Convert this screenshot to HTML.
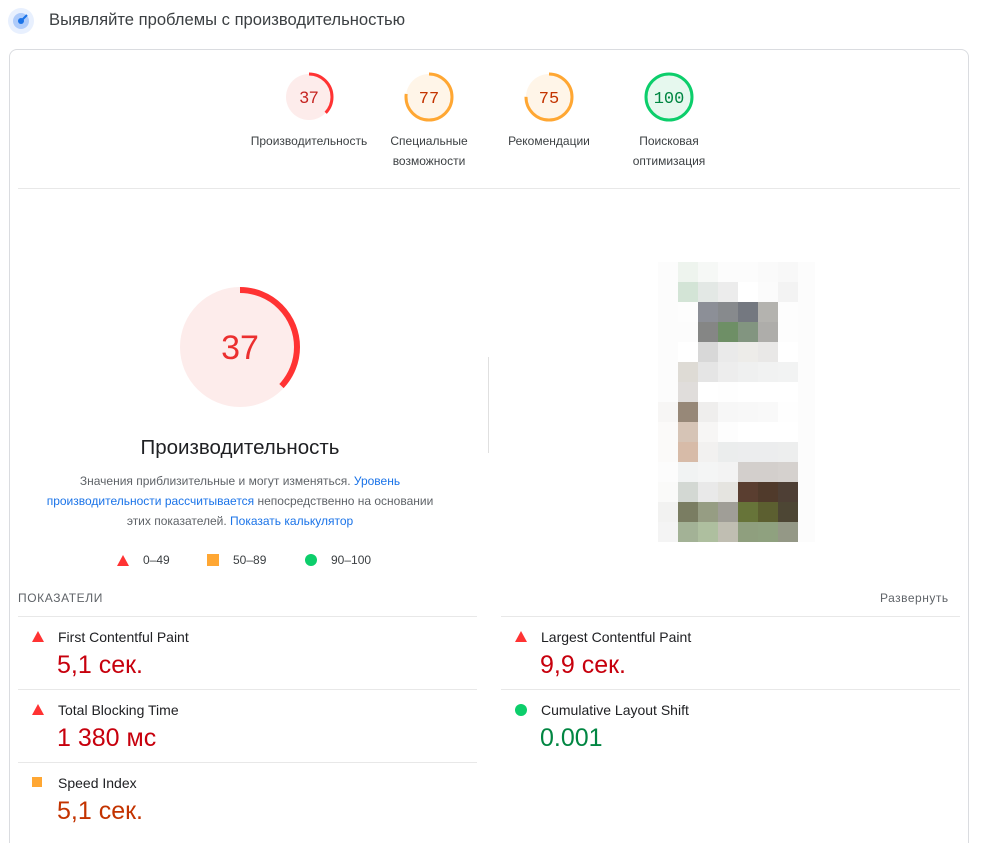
<!DOCTYPE html>
<html style="width:981px;height:843px;overflow:hidden"><head><meta charset="utf-8"><style>
*{margin:0;padding:0;box-sizing:border-box}
body{width:981px;height:843px;overflow:hidden;background:#fff;font-family:"Liberation Sans",Arial,sans-serif;color:#202124;position:relative}
.a{position:absolute}
.card{position:absolute;left:9px;top:49px;width:960px;height:820px;border:1px solid #dadce0;border-radius:8px}
.lbl{position:absolute;font-size:12px;color:#3c4043;text-align:center;line-height:20px;width:130px}
.hr{position:absolute;height:1px;background:#e8e8e8}
.mt{position:absolute;font-size:14px;color:#202124}
.mv{position:absolute;font-size:25px}
.tri{position:absolute;width:0;height:0;border-left:6px solid transparent;border-right:6px solid transparent;border-bottom:11px solid #ff3333}
.grid{position:absolute;left:658px;top:262px;display:grid;grid-template-columns:20px 20px 20px 20px 20px 20px 20px 17px;grid-auto-rows:20px}
.link{color:#1a73e8}
</style></head><body>
<svg class="a" style="left:8px;top:8px" width="26" height="26"><circle cx="13" cy="13" r="13" fill="#e8f0fe"/><circle cx="13" cy="13" r="8" fill="#aecbfa"/><circle cx="13" cy="13" r="3" fill="#1a73e8"/><path d="M14 12 L19 7" stroke="#1a73e8" stroke-width="2"/></svg>
<div class="a" style="left:49px;top:10px;font-size:16.6px;color:#3c4043">Выявляйте проблемы с производительностью</div>
<div class="card"></div>

<svg class="a" style="left:284px;top:72px" width="50" height="50"><circle cx="25" cy="25" r="23" fill="#fdeceb"/><circle cx="25" cy="25" r="23" fill="none" stroke="#ff3333" stroke-width="3" stroke-dasharray="53.5 200" transform="rotate(-90 25 25)"/><text x="25" y="31" text-anchor="middle" font-family="Liberation Sans" font-size="17" fill="#c5221f">37</text></svg>
<svg class="a" style="left:404px;top:72px" width="50" height="50"><circle cx="25" cy="25" r="23" fill="#fff5e8"/><circle cx="25" cy="25" r="23" fill="none" stroke="#ffa733" stroke-width="3" stroke-dasharray="111.3 200" transform="rotate(-90 25 25)"/><text x="25" y="31" text-anchor="middle" font-family="Liberation Mono" font-size="17" fill="#c33300">77</text></svg>
<svg class="a" style="left:524px;top:72px" width="50" height="50"><circle cx="25" cy="25" r="23" fill="#fff5e8"/><circle cx="25" cy="25" r="23" fill="none" stroke="#ffa733" stroke-width="3" stroke-dasharray="108.4 200" transform="rotate(-90 25 25)"/><text x="25" y="31" text-anchor="middle" font-family="Liberation Mono" font-size="17" fill="#c33300">75</text></svg>
<svg class="a" style="left:644px;top:72px" width="50" height="50"><circle cx="25" cy="25" r="23" fill="#e6f8ee" stroke="#0cce6b" stroke-width="3"/><text x="25" y="31" text-anchor="middle" font-family="Liberation Mono" font-size="17" fill="#018642">100</text></svg>
<div class="lbl" style="left:244px;top:131px">Производительность</div>
<div class="lbl" style="left:364px;top:131px">Специальные<br>возможности</div>
<div class="lbl" style="left:484px;top:131px">Рекомендации</div>
<div class="lbl" style="left:604px;top:131px">Поисковая<br>оптимизация</div>
<div class="hr" style="left:18px;top:188px;width:942px"></div>

<svg class="a" style="left:177px;top:284px" width="126" height="126"><circle cx="63" cy="63" r="60" fill="#fdeceb"/><circle cx="63" cy="63" r="57" fill="none" stroke="#ff3333" stroke-width="6" stroke-dasharray="132.5 400" transform="rotate(-90 63 63)"/><text x="63" y="75" text-anchor="middle" font-family="Liberation Sans" font-size="34" fill="#eb2f2f">37</text></svg>
<div class="a" style="left:40px;width:400px;top:436px;text-align:center;font-size:20.5px;color:#202124">Производительность</div>
<div class="a" style="left:40px;width:400px;top:471px;text-align:center;font-size:12px;line-height:20px;color:#5f6368">Значения приблизительные и могут изменяться. <span class="link">Уровень производительности рассчитывается</span> непосредственно на основании этих показателей. <span class="link">Показать калькулятор</span></div>
<div class="tri" style="left:117px;top:555px"></div><div class="a" style="left:143px;top:553px;font-size:12px;color:#3c4043">0–49</div>
<div class="a" style="left:207px;top:554px;width:12px;height:12px;background:#ffa733"></div><div class="a" style="left:233px;top:553px;font-size:12px;color:#3c4043">50–89</div>
<div class="a" style="left:305px;top:554px;width:12px;height:12px;border-radius:50%;background:#0cce6b"></div><div class="a" style="left:331px;top:553px;font-size:12px;color:#3c4043">90–100</div>
<div class="a" style="left:488px;top:357px;width:1px;height:96px;background:#e0e0e0"></div>

<div class="grid">
<div style="background:#fcfcfc"></div><div style="background:#eef4ee"></div><div style="background:#f6f8f6"></div><div style="background:#fcfcfc"></div><div style="background:#fcfcfc"></div><div style="background:#fafafa"></div><div style="background:#f8f8f8"></div><div style="background:#fcfcfc"></div>
<div style="background:#fcfcfc"></div><div style="background:#d3e4d6"></div><div style="background:#e3e8e5"></div><div style="background:#ececec"></div><div style="background:#fff"></div><div style="background:#fbfbfb"></div><div style="background:#f3f3f3"></div><div style="background:#fcfcfc"></div>
<div style="background:#fcfcfc"></div><div style="background:#fdfdfd"></div><div style="background:#8c8f97"></div><div style="background:#878a8d"></div><div style="background:#747880"></div><div style="background:#b4b3af"></div><div style="background:#fdfdfd"></div><div style="background:#fcfcfc"></div>
<div style="background:#fcfcfc"></div><div style="background:#fcfcfc"></div><div style="background:#858685"></div><div style="background:#6e8f66"></div><div style="background:#829580"></div><div style="background:#aeadaa"></div><div style="background:#fdfdfd"></div><div style="background:#fcfcfc"></div>
<div style="background:#fcfcfc"></div><div style="background:#fff"></div><div style="background:#d8d8d8"></div><div style="background:#eaeaea"></div><div style="background:#edece9"></div><div style="background:#e9e8e7"></div><div style="background:#fff"></div><div style="background:#fcfcfc"></div>
<div style="background:#fcfcfc"></div><div style="background:#dedbd5"></div><div style="background:#e5e5e5"></div><div style="background:#ededed"></div><div style="background:#eff0f0"></div><div style="background:#f1f2f2"></div><div style="background:#f2f3f3"></div><div style="background:#fcfcfc"></div>
<div style="background:#fcfcfc"></div><div style="background:#e0dddb"></div><div style="background:#fff"></div><div style="background:#fefefe"></div><div style="background:#fff"></div><div style="background:#fff"></div><div style="background:#fff"></div><div style="background:#fcfcfc"></div>
<div style="background:#f7f6f5"></div><div style="background:#978878"></div><div style="background:#efeeed"></div><div style="background:#f7f7f7"></div><div style="background:#f8f8f8"></div><div style="background:#f9f9f9"></div><div style="background:#fefefe"></div><div style="background:#fcfcfc"></div>
<div style="background:#fbfaf9"></div><div style="background:#d6c4b6"></div><div style="background:#f7f6f5"></div><div style="background:#fdfdfd"></div><div style="background:#fff"></div><div style="background:#fff"></div><div style="background:#fff"></div><div style="background:#fcfcfc"></div>
<div style="background:#fbfaf9"></div><div style="background:#d7bba8"></div><div style="background:#f2f1f0"></div><div style="background:#ebeded"></div><div style="background:#ecedee"></div><div style="background:#ecedee"></div><div style="background:#edeeee"></div><div style="background:#fcfcfc"></div>
<div style="background:#fcfcfc"></div><div style="background:#f1f3f3"></div><div style="background:#f4f5f5"></div><div style="background:#f3f3f3"></div><div style="background:#d3cfcc"></div><div style="background:#d3cfcc"></div><div style="background:#d5d1ce"></div><div style="background:#fcfcfc"></div>
<div style="background:#fafaf9"></div><div style="background:#d3d8d3"></div><div style="background:#e9e9e9"></div><div style="background:#e5e4e0"></div><div style="background:#5a3e30"></div><div style="background:#503a2b"></div><div style="background:#4e3f35"></div><div style="background:#fcfcfc"></div>
<div style="background:#f2f2f1"></div><div style="background:#7a7d62"></div><div style="background:#969d83"></div><div style="background:#a09e97"></div><div style="background:#677439"></div><div style="background:#5c5f30"></div><div style="background:#4d4634"></div><div style="background:#fcfcfc"></div>
<div style="background:#f4f4f4"></div><div style="background:#a3b296"></div><div style="background:#aebf9f"></div><div style="background:#c0beb2"></div><div style="background:#8f9f7e"></div><div style="background:#8fa17f"></div><div style="background:#949886"></div><div style="background:#fcfcfc"></div>
</div>

<div class="a" style="left:18px;top:591px;font-size:12px;letter-spacing:0.6px;color:#5f6368">ПОКАЗАТЕЛИ</div>
<div class="a" style="left:880px;top:591px;font-size:12px;letter-spacing:0.5px;color:#5f6368">Развернуть</div>
<div class="hr" style="left:18px;top:616px;width:459px"></div>
<div class="hr" style="left:501px;top:616px;width:459px"></div>
<div class="hr" style="left:18px;top:689px;width:459px"></div>
<div class="hr" style="left:501px;top:689px;width:459px"></div>
<div class="hr" style="left:18px;top:762px;width:459px"></div>

<div class="tri" style="left:32px;top:631px"></div><div class="mt" style="left:58px;top:629px">First Contentful Paint</div><div class="mv" style="left:57px;top:651px;color:#c7000d">5,1 сек.</div>
<div class="tri" style="left:32px;top:704px"></div><div class="mt" style="left:58px;top:702px">Total Blocking Time</div><div class="mv" style="left:57px;top:724px;color:#c7000d">1 380 мс</div>
<div class="a" style="left:32px;top:777px;width:10px;height:10px;background:#ffa733"></div><div class="mt" style="left:58px;top:775px">Speed Index</div><div class="mv" style="left:57px;top:797px;color:#c33300">5,1 сек.</div>

<div class="tri" style="left:515px;top:631px"></div><div class="mt" style="left:541px;top:629px">Largest Contentful Paint</div><div class="mv" style="left:540px;top:651px;color:#c7000d">9,9 сек.</div>
<div class="a" style="left:515px;top:704px;width:12px;height:12px;border-radius:50%;background:#0cce6b"></div><div class="mt" style="left:541px;top:702px">Cumulative Layout Shift</div><div class="mv" style="left:540px;top:724px;color:#018642">0.001</div>
</body></html>
